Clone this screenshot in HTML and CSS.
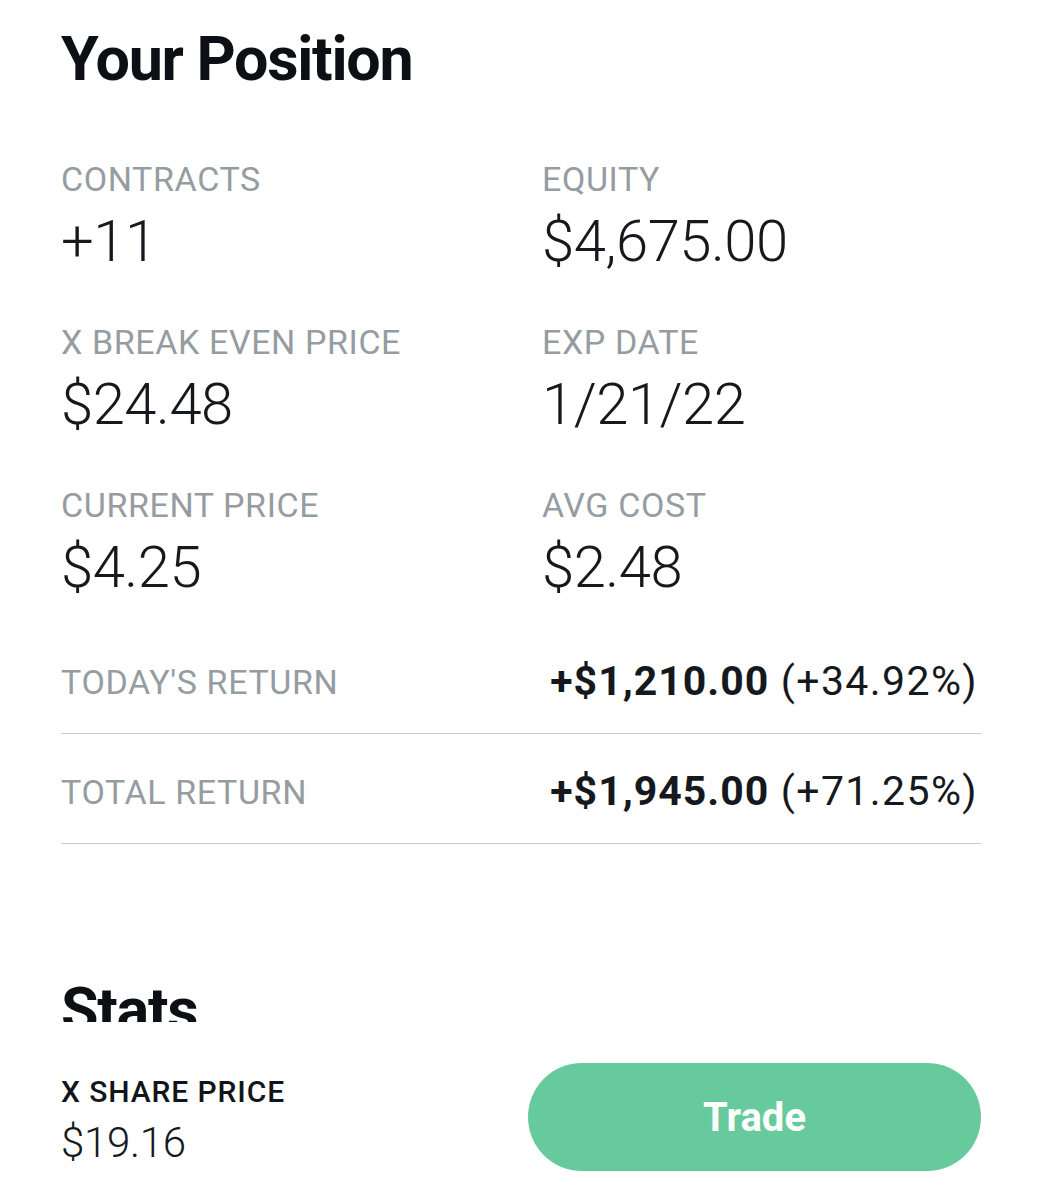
FILE: index.html
```html
<!DOCTYPE html>
<html>
<head>
<meta charset="utf-8">
<link rel="stylesheet" href="styles.css">
</head>
<body>
<main class="page">
  <h1 class="title">Your Position</h1>
  <div class="grid">
    <div class="cell"><div class="label">CONTRACTS</div><div class="value">+11</div></div>
    <div class="cell"><div class="label">EQUITY</div><div class="value">$4,675.00</div></div>
    <div class="cell"><div class="label">X BREAK EVEN PRICE</div><div class="value">$24.48</div></div>
    <div class="cell"><div class="label">EXP DATE</div><div class="value">1/21/22</div></div>
    <div class="cell"><div class="label">CURRENT PRICE</div><div class="value">$4.25</div></div>
    <div class="cell"><div class="label">AVG COST</div><div class="value">$2.48</div></div>
  </div>
  <div class="returns">
    <div class="ret-row"><span class="label">TODAY'S RETURN</span><span class="ret-val"><b>+$1,210.00</b> (+34.92%)</span></div>
    <div class="ret-row"><span class="label">TOTAL RETURN</span><span class="ret-val"><b>+$1,945.00</b> (+71.25%)</span></div>
  </div>
  <h2 class="title stats">Stats</h2>
</main>
<footer class="bar">
  <div class="share">
    <div class="share-label">X SHARE PRICE</div>
    <div class="share-value">$19.16</div>
  </div>
  <button class="trade">Trade</button>
</footer>
</body>
</html>
```
FILE: styles.css
```css
html, body { margin: 0; padding: 0; background: #fff; }
body { font-family: Roboto, "Liberation Sans", sans-serif; color: #1a1d21; }
.page { padding: 0 61px 200px 61px; }
.title {
  margin: 0;
  padding-top: 28px;
  font-size: 61px;
  line-height: 62px;
  font-weight: 700;
  color: #0c1014;
  letter-spacing: -1.3px;
}
.grid {
  margin-top: 70px;
  display: grid;
  grid-template-columns: 481px 1fr;
  row-gap: 50px;
}
.label {
  font-size: 34px;
  line-height: 40px;
  color: #959ca2;
  letter-spacing: 0.6px;
  font-weight: 400;
  position: relative;
  top: -1px;
}
.value {
  margin-top: 9px;
  font-size: 58px;
  line-height: 64px;
  font-weight: 300;
  color: #15191d;
  letter-spacing: -0.5px;
}
.returns { margin-top: 25px; }
.ret-row {
  display: flex;
  justify-content: space-between;
  align-items: baseline;
  height: 110px;
  box-sizing: border-box;
  padding: 37px 3px 0 0;
  border-bottom: 1px solid #c9cbcd;
}
.ret-val {
  font-size: 41px;
  line-height: 40px;
  color: #15191d;
  font-weight: 400;
  letter-spacing: 1.4px;
}
.ret-val b { font-weight: 700; letter-spacing: 1px; }
.stats { padding-top: 0; margin-top: 135px; }
.bar {
  position: fixed;
  left: 0; right: 0; bottom: 0;
  height: 178px;
  background: #fff;
  display: flex;
  align-items: flex-start;
  justify-content: space-between;
  padding: 0 61px 0 61px;
  box-sizing: border-box;
}
.share { padding-top: 54px; }
.share-label {
  font-size: 30px;
  line-height: 32px;
  font-weight: 500;
  color: #121518;
  letter-spacing: 0.9px;
}
.share-value {
  margin-top: 11px;
  font-size: 42px;
  line-height: 48px;
  font-weight: 300;
  color: #15191d;
  letter-spacing: -0.3px;
}
.trade {
  margin-top: 41px;
  width: 453px;
  height: 108px;
  border: none;
  border-radius: 54px;
  background: #66ca9d;
  color: #fff;
  font-family: Roboto, "Liberation Sans", sans-serif;
  font-size: 40px;
  font-weight: 700;
}
```
